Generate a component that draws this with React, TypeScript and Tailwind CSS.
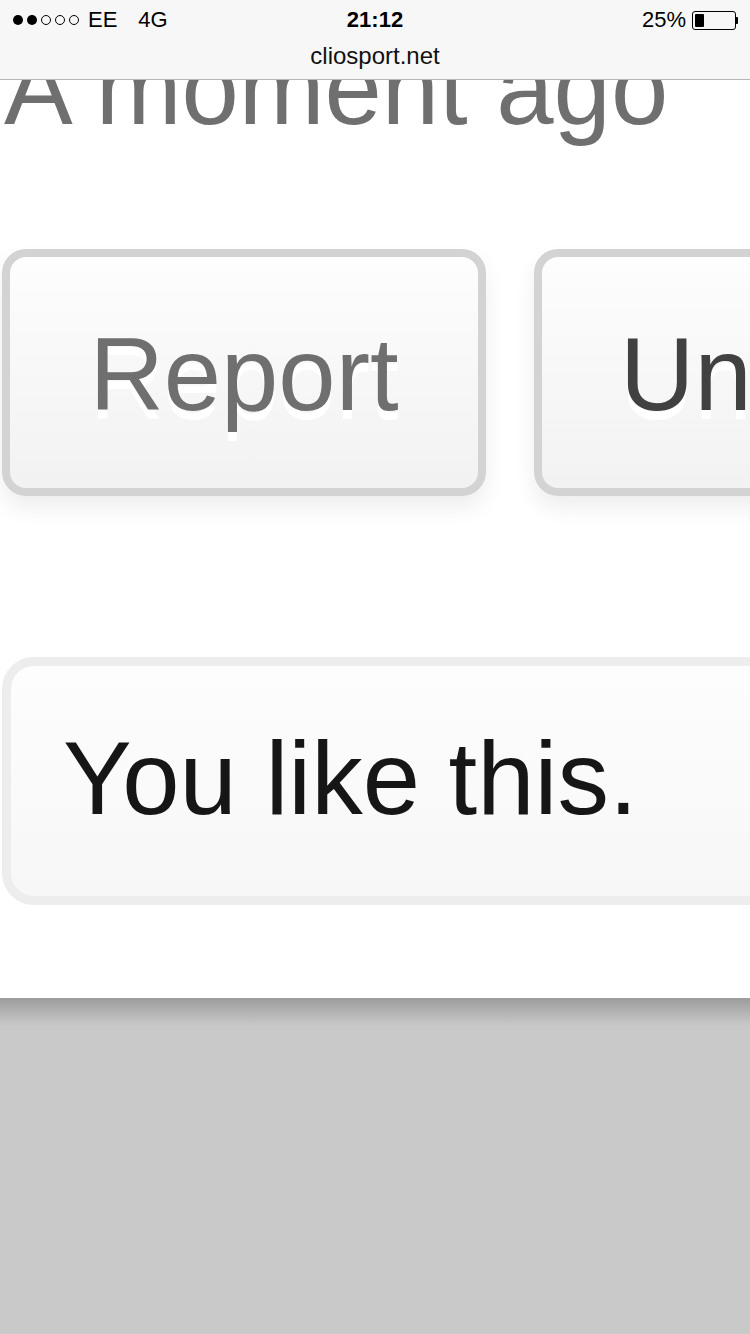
import React from 'react';

const sans = "font-['Liberation_Sans','Helvetica_Neue',Arial,sans-serif]";

function SignalDots() {
  return (
    <div className="flex items-center gap-[4px]">
      {[0, 1, 2, 3, 4].map((i) => (
        <span
          key={i}
          className={
            i < 2
              ? 'w-[10px] h-[10px] rounded-full bg-black'
              : 'w-[10px] h-[10px] rounded-full border border-black bg-transparent'
          }
        />
      ))}
    </div>
  );
}

function Battery() {
  return (
    <div className="flex items-center">
      <div className="w-[44px] h-[19px] rounded-[3px] border-[1.5px] border-black p-[2px] flex">
        <div className="w-[9px] h-full bg-black rounded-[1px]" />
      </div>
      <div className="w-[2px] h-[7px] bg-black rounded-r-[1px]" />
    </div>
  );
}

function StatusBar() {
  return (
    <div className="absolute top-0 inset-x-0 h-[80px] bg-[#f7f7f7] border-b border-[#b4b4b4] z-10">
      <div className="relative h-[40px] flex items-center justify-between pl-[13px] pr-[12px] text-[22px] leading-none text-black">
        <div className="flex items-center">
          <SignalDots />
          <span className="ml-[9px]">EE</span>
          <span className="ml-[21px]">4G</span>
        </div>
        <span className="absolute left-1/2 -translate-x-1/2 font-bold">21:12</span>
        <div className="flex items-center gap-[6px]">
          <span>25%</span>
          <Battery />
        </div>
      </div>
      <div className="mt-[4px] text-center text-[24px] leading-none text-[#111]">cliosport.net</div>
    </div>
  );
}

function ActionButton({ label, tone }: { label: string; tone: string }) {
  return (
    <div className="shrink-0 h-[247px] px-[78px] pt-[4px] flex items-center border-[8px] border-[#d3d3d3] rounded-[24px] bg-gradient-to-b from-[#fdfdfd] to-[#f2f2f2] shadow-[0_12px_22px_rgba(0,0,0,0.07)]">
      <span className={`${tone} text-[103px] leading-none [text-shadow:0_9px_0_#ffffff]`}>{label}</span>
    </div>
  );
}

export default function App() {
  return (
    <div className={`${sans} relative w-[750px] h-[1334px] overflow-hidden bg-white`}>
      <StatusBar />

      <div className="pt-[37px]">
        <div className="pl-[4px] text-[103px] leading-none text-[#6f6f6f] whitespace-nowrap">A moment ago</div>

        <div className="mt-[109px] ml-[2px] flex gap-[48px]">
          <div className="w-[484px] shrink-0 flex">
            <div className="w-full h-[247px] pt-[4px] flex items-center justify-center border-[8px] border-[#d3d3d3] rounded-[24px] bg-gradient-to-b from-[#fdfdfd] to-[#f2f2f2] shadow-[0_12px_22px_rgba(0,0,0,0.07)]">
              <span className="text-[#6f6f6f] text-[103px] leading-none [text-shadow:0_9px_0_#ffffff]">Report</span>
            </div>
          </div>
          <ActionButton label="Unlike" tone="text-[#414141]" />
        </div>

        <div className="mt-[161px] ml-[2px] w-[900px] h-[248px] pl-[52px] pb-[6px] flex items-center border-[9px] border-[#ededed] rounded-[32px] bg-gradient-to-b from-[#fdfdfd] to-[#f7f7f7]">
          <span className="text-[#161616] text-[103px] leading-none whitespace-nowrap">You like this.</span>
        </div>

        <div className="mt-[93px] h-[340px] bg-[#c9c9c9] flex flex-col">
          <div className="h-[28px] bg-gradient-to-b from-[#9c9c9c] to-[#c9c9c9]" />
        </div>
      </div>
    </div>
  );
}
